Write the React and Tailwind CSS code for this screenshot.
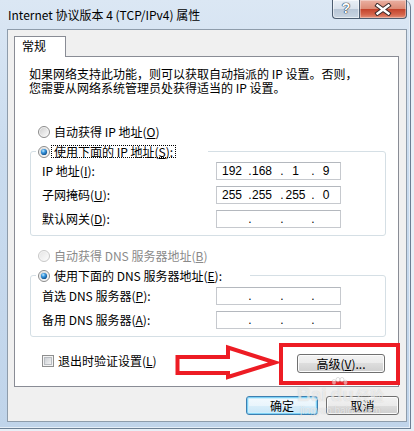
import React from "react";

function Radio({ checked = false, disabled = false }) {
  const bg = disabled ? "rbgd" : "rbg";
  return (
    <svg width="12" height="12" viewBox="0 0 12 12" className="shrink-0">
      <defs>
        <linearGradient id="rbg" x1="0" y1="0" x2="1" y2="1">
          <stop offset="0" stopColor="#cfcfcf" />
          <stop offset="1" stopColor="#fbfbfb" />
        </linearGradient>
        <linearGradient id="rbgd" x1="0" y1="0" x2="1" y2="1">
          <stop offset="0" stopColor="#e6e6e6" />
          <stop offset="1" stopColor="#fbfbfb" />
        </linearGradient>
        <radialGradient id="rdot" cx="0.38" cy="0.32" r="0.75">
          <stop offset="0" stopColor="#c4ecff" />
          <stop offset="0.4" stopColor="#3a98e0" />
          <stop offset="1" stopColor="#0a4783" />
        </radialGradient>
      </defs>
      <circle cx="6" cy="6" r="5.5" fill="#f6f6f6" stroke={disabled ? "#c8c8c8" : "#8a8a8a"} />
      <circle cx="6" cy="6" r="4.3" fill={`url(#${bg})`} />
      {checked && <circle cx="6" cy="6" r="3.1" fill="url(#rdot)" />}
    </svg>
  );
}

function Checkbox() {
  return (
    <svg width="12" height="12" viewBox="0 0 12 12" className="shrink-0">
      <defs>
        <linearGradient id="cbg" x1="0" y1="0" x2="1" y2="1">
          <stop offset="0" stopColor="#c9cdd2" />
          <stop offset="1" stopColor="#f5f5f5" />
        </linearGradient>
      </defs>
      <rect x="0.5" y="0.5" width="11" height="11" fill="#f4f4f4" stroke="#8e8f8f" />
      <rect x="2.5" y="2.5" width="7" height="7" fill="url(#cbg)" stroke="#b9bdc2" strokeWidth="1" />
    </svg>
  );
}

function IPBox({ v }) {
  const vals = v || ["", "", "", ""];
  return (
    <div className="flex h-[18px] w-[125px] items-center border border-[#c6c9ce] border-t-[#b4b8be] bg-white font-['Liberation_Sans',sans-serif] text-[12px] leading-[16px]">
      <div className="flex w-[30px] justify-center">{vals[0]}</div>
      <div className="flex w-[6px] justify-center">.</div>
      <div className="flex w-[26px] justify-center pr-[8px]">{vals[1]}</div>
      <div className="flex w-[6px] justify-center">.</div>
      <div className="flex w-[25px] justify-center pr-[4px]">{vals[2]}</div>
      <div className="flex w-[6px] justify-center">.</div>
      <div className="flex flex-1 justify-center pr-[4px]">{vals[3]}</div>
    </div>
  );
}

function Row({ label, k, rest, v }) {
  return (
    <div className="flex h-[18px] items-center">
      <div className="w-[174px] whitespace-nowrap leading-[14px]">
        {label}(<u>{k}</u>){rest}
      </div>
      <IPBox v={v} />
    </div>
  );
}

const btn =
  "flex items-center justify-center rounded-[3px] border border-[#707070] bg-[linear-gradient(to_bottom,#f2f2f2_0%,#ebebeb_50%,#dddddd_50%,#cfcfcf_100%)] shadow-[inset_0_0_0_1px_#fcfcfc] leading-[14px]";

export default function App() {
  return (
    <div className="relative h-[431px] w-[414px] overflow-hidden bg-[#e8eff7] font-['Noto_Sans_CJK_SC','Noto_Sans',sans-serif] text-[12px] text-black">
      <div className="flex h-[429px] w-[411px] flex-col rounded-tr-[7px] border-r border-b border-[#6c7f94] bg-[linear-gradient(to_bottom,#dbe7f4_0%,#cadcef_35%,#c0d4ea_100%)] shadow-[inset_-1px_-1px_0_#e6eef7]">
        {/* title bar */}
        <div className="flex h-[29px] shrink-0">
          <div className="whitespace-nowrap pl-[8px] pt-[6px] leading-[18px]">
            Internet 协议版本 4 (TCP/IPv4) 属性
          </div>
          <div className="ml-auto mr-[3px] flex h-[19px]">
            <div className="flex h-[19px] w-[27px] items-start justify-center rounded-bl-[4px] border-b border-l border-[#4d5d70] bg-[linear-gradient(to_bottom,#e9eff6_0%,#d9e2ec_50%,#b7c5d5_50%,#c9d5e2_100%)] shadow-[inset_0_0_0_1px_rgba(255,255,255,0.55)]">
              <span className="font-['Liberation_Sans',sans-serif] text-[14px] font-bold leading-[17px] text-white [text-shadow:0_0_1px_#1f2d3d,0_0_1px_#1f2d3d,0_0_1px_#1f2d3d]">
                ?
              </span>
            </div>
            <div className="flex h-[19px] w-[48px] items-center justify-center rounded-br-[4px] border-x border-b border-[#4d5d70] bg-[linear-gradient(to_bottom,#eab0a2_0%,#dc8a74_50%,#c2412a_50%,#d4634a_80%,#e2907a_100%)] shadow-[inset_0_0_0_1px_rgba(255,255,255,0.35)]">
              <svg width="18" height="13" viewBox="0 0 18 13">
                <path d="M3.5 2.5 L14.5 10.5 M14.5 2.5 L3.5 10.5" stroke="#3b2a2a" strokeWidth="4.4" strokeLinecap="square" />
                <path d="M3.5 2.5 L14.5 10.5 M14.5 2.5 L3.5 10.5" stroke="#ffffff" strokeWidth="2.4" strokeLinecap="square" />
              </svg>
            </div>
          </div>
        </div>

        {/* client area */}
        <div className="ml-[7px] flex h-[393px] w-[400px] flex-col border border-[#8e9cab] bg-[#f0f0f0]">
          <div className="flex pl-[6px] pt-[6px]">
            <div className="relative z-10 h-[21px] w-[52px] border-x border-t border-[#898c95] bg-white pl-[7px] pt-[1px] leading-[16px]">
              常规
            </div>
          </div>
          <div className="-mt-[1px] ml-[6px] flex h-[331px] w-[385px] flex-col border border-[#898c95] bg-white">
            <div className="mt-[10px] flex flex-col pl-[14px]">
              <div className="h-[14px] whitespace-nowrap leading-[14px]">
                如果网络支持此功能，则可以获取自动指派的 IP 设置。否则，
              </div>
              <div className="h-[14px] whitespace-nowrap leading-[14px]">
                您需要从网络系统管理员处获得适当的 IP 设置。
              </div>
            </div>

            <div className="mt-[29px] flex h-[16px] items-center gap-[4px] pl-[23px] leading-[14px]">
              <Radio />
              <span>
                自动获得 IP 地址(<u>O</u>)
              </span>
            </div>

            <fieldset className="mt-[4px] ml-[15px] w-[356px] rounded-[3px] border border-[#d5dfe5] pb-[7px]">
              <legend className="ml-[5px] flex h-[15px] w-[172px] items-center pl-[2px]">
                <Radio checked />
                <span className="ml-[1px] flex h-[13px] items-center border border-dotted border-black px-[2px] leading-[11px]">
                  使用下面的 IP 地址(<u>S</u>):
                </span>
              </legend>
              <div className="mt-[3px] flex flex-col gap-[6px] pl-[11px]">
                <Row label="IP 地址" k="I" rest=":" v={["192", "168", "1", "9"]} />
                <Row label="子网掩码" k="U" rest=":" v={["255", "255", "255", "0"]} />
                <Row label="默认网关" k="D" rest=":" />
              </div>
            </fieldset>

            <div className="mt-[12px] flex h-[16px] items-center gap-[4px] pl-[23px] leading-[14px] text-[#8a8a8a]">
              <Radio disabled />
              <span>
                自动获得 DNS 服务器地址(<u>B</u>)
              </span>
            </div>

            <fieldset className="mt-[4px] ml-[15px] w-[356px] rounded-[3px] border border-[#d5dfe5] pb-[7px]">
              <legend className="ml-[5px] flex h-[15px] w-[214px] items-center gap-[4px] pl-[2px]">
                <Radio checked />
                <span className="leading-[14px]">
                  使用下面的 DNS 服务器地址(<u>E</u>):
                </span>
              </legend>
              <div className="mt-[4px] flex flex-col gap-[6px] pl-[11px]">
                <Row label="首选 DNS 服务器" k="P" rest=":" />
                <Row label="备用 DNS 服务器" k="A" rest=":" />
              </div>
            </fieldset>

            <div className="mt-[17px] flex items-start pl-[27px] pr-[13px]">
              <div className="flex h-[13px] items-center gap-[4px] leading-[13px]">
                <Checkbox />
                <span>
                  退出时验证设置(<u>L</u>)
                </span>
              </div>
              <div className={`${btn} ml-auto h-[19px] w-[88px]`}>
                高级(<u>V</u>)...
              </div>
            </div>
          </div>

          <div className="mt-[9px] flex justify-end gap-[8px] pr-[7px]">
            <div className="flex h-[19px] w-[72px] items-center justify-center rounded-[3px] border border-[#3c7fb1] bg-[linear-gradient(to_bottom,#f4fafe_0%,#e9f5fc_50%,#d9eefa_50%,#c9e6f7_100%)] leading-[14px] shadow-[inset_0_0_0_1px_#7fd1f5,inset_0_0_0_2px_#cdeefc]">
              确定
            </div>
            <div className={`${btn} h-[19px] w-[73px]`}>取消</div>
          </div>
        </div>
      </div>

      {/* red annotation */}
      <div className="pointer-events-none absolute left-[279px] top-[343px] h-[42px] w-[121px] border-4 border-[#ed1c24]" />
      <svg
        className="pointer-events-none absolute left-[170px] top-[340px]"
        width="112"
        height="44"
        viewBox="170 340 112 44"
      >
        <polygon
          points="177.5,357 228,357 228,347.5 275,362.5 228,377 228,373 177.5,373"
          fill="none"
          stroke="#ed1c24"
          strokeWidth="4"
          strokeLinejoin="miter"
        />
      </svg>

      {/* watermark */}
      <div className="pointer-events-none absolute left-[297px] top-[377px] h-[42px] w-[90px] text-white/60 [text-shadow:0_0_1px_rgba(120,120,120,0.35)]">
        <svg className="absolute left-[33px] top-0" width="18" height="12" viewBox="0 0 18 12">
          <g fill="rgba(255,255,255,0.5)" stroke="rgba(140,140,140,0.35)" strokeWidth="0.8">
            <ellipse cx="4" cy="5" rx="2" ry="2.5" />
            <ellipse cx="8" cy="2.8" rx="2" ry="2.4" />
            <ellipse cx="12" cy="2.8" rx="2" ry="2.4" />
            <ellipse cx="15.5" cy="5.5" rx="1.8" ry="2.3" />
          </g>
        </svg>
        <div className="absolute left-0 top-[9px] flex items-end whitespace-nowrap leading-[18px]">
          <span className="font-['Liberation_Sans',sans-serif] text-[19px] font-bold">Bai</span>
          <span className="ml-[4px] font-['Liberation_Sans',sans-serif] text-[19px] font-bold">du</span>
          <span className="ml-[2px] text-[14px] leading-[17px]">经验</span>
        </div>
        <div className="absolute left-[3px] top-[29px] whitespace-nowrap font-['Liberation_Sans',sans-serif] text-[10px] leading-[10px]">
          jingyan.baidu.com
        </div>
      </div>
    </div>
  );
}
